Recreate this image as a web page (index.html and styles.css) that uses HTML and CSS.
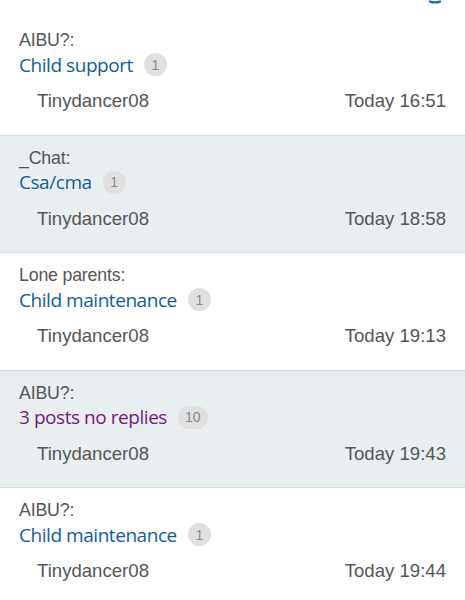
FILE: index.html
```html
<!DOCTYPE html>
<html lang="en">
<head>
  <meta charset="UTF-8" />
  <meta name="viewport" content="width=device-width, initial-scale=1.0" />
  <title>Threads I'm watching</title>
  <link rel="stylesheet" href="styles.css">
</head>
<body>
  <div class="top-strip">
    <svg class="top-mark" width="12" height="4" viewBox="0 0 12 4">
      <path d="M1 1.6 Q6 3.2 11 1.6" fill="none" stroke="#1b6fb0" stroke-width="2.4" stroke-linecap="round"/>
    </svg>
  </div>

  <ul class="threads">
    <li class="thread">
      <div class="topic">AIBU?:</div>
      <div class="title-line">
        <a class="title" href="#">Child support</a>
        <span class="count">1</span>
      </div>
      <div class="meta">
        <span class="author">Tinydancer08</span>
        <span class="time">Today 16:51</span>
      </div>
    </li>
    <li class="thread shaded">
      <div class="topic">_Chat:</div>
      <div class="title-line">
        <a class="title" href="#">Csa/cma</a>
        <span class="count">1</span>
      </div>
      <div class="meta">
        <span class="author">Tinydancer08</span>
        <span class="time">Today 18:58</span>
      </div>
    </li>
    <li class="thread">
      <div class="topic">Lone parents:</div>
      <div class="title-line">
        <a class="title" href="#">Child maintenance</a>
        <span class="count">1</span>
      </div>
      <div class="meta">
        <span class="author">Tinydancer08</span>
        <span class="time">Today 19:13</span>
      </div>
    </li>
    <li class="thread shaded">
      <div class="topic">AIBU?:</div>
      <div class="title-line">
        <a class="title visited" href="#">3 posts no replies</a>
        <span class="count">10</span>
      </div>
      <div class="meta">
        <span class="author">Tinydancer08</span>
        <span class="time">Today 19:43</span>
      </div>
    </li>
    <li class="thread">
      <div class="topic">AIBU?:</div>
      <div class="title-line">
        <a class="title" href="#">Child maintenance</a>
        <span class="count">1</span>
      </div>
      <div class="meta">
        <span class="author">Tinydancer08</span>
        <span class="time">Today 19:44</span>
      </div>
    </li>
  </ul>
</body>
</html>
```

FILE: styles.css
```css
:root {
  --link: #0f5e9c;
  --visited: #76187c;
  --text-grey: #565656;
  --shade: #e9eef1;
  --line: #d9dde0;
  --badge: #e0e0e0;
  --badge-text: #8a8a8a;
}

* {
  margin: 0;
  padding: 0;
  box-sizing: border-box;
}

body {
  background: #ffffff;
  font-family: 'Liberation Sans', Arial, sans-serif;
  color: var(--text-grey);
  overflow: hidden;
}

.top-strip {
  height: 18px;
  display: flex;
  justify-content: flex-end;
}

.top-mark {
  margin-right: 24px;
}

.threads {
  list-style: none;
}

.thread {
  height: 117.5px;
  padding: 11px 19px 0 19px;
  border-bottom: 1px solid var(--line);
}

.thread.shaded {
  background: var(--shade);
}

.topic {
  font-size: 17.8px;
  line-height: 22px;
  letter-spacing: -0.2px;
}

.title-line {
  display: flex;
  align-items: center;
  gap: 11px;
  height: 27px;
}

.title {
  font-family: 'Open Sans', 'Noto Sans', sans-serif;
  font-size: 19px;
  letter-spacing: -0.45px;
  color: var(--link);
  text-decoration: none;
}

.title.visited {
  color: var(--visited);
}

.count {
  min-width: 23px;
  height: 23px;
  padding: 0 7px;
  border-radius: 12px;
  background: var(--badge);
  color: var(--badge-text);
  font-size: 14px;
  display: flex;
  align-items: center;
  justify-content: center;
}

.meta {
  display: flex;
  justify-content: space-between;
  align-items: baseline;
  padding-left: 18px;
  margin-top: 12px;
  font-size: 18.6px;
  line-height: 22px;
}
```
